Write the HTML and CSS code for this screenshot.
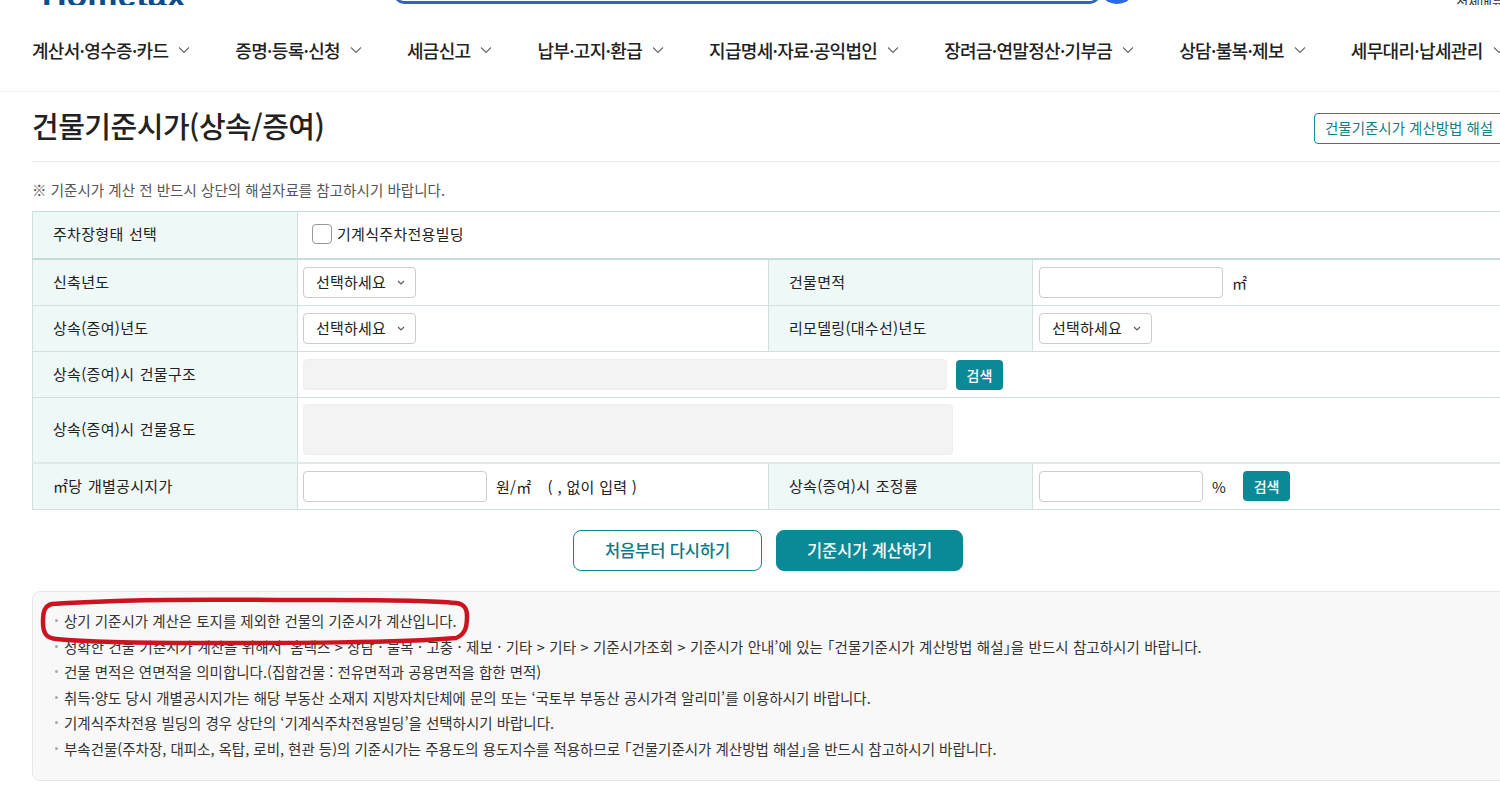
FILE: index.html
```html
<!DOCTYPE html>
<html lang="ko">
<head>
<meta charset="utf-8">
<title>건물기준시가(상속/증여)</title>
<link rel="stylesheet" href="styles.css">
</head>
<body>
<div class="page">
  <div class="topstrip">
    <div class="logo">Hometax</div>
    <div class="searchbar"></div>
    <div class="searchbtn"></div>
    <div class="allmenu">전체메뉴</div>
  </div>
  <nav class="gnb">
    <a class="gnb-item">계산서·영수증·카드<svg class="chev" viewBox="0 0 12 8"><path d="M1 1.5 6 6.5 11 1.5"/></svg></a>
    <a class="gnb-item">증명·등록·신청<svg class="chev" viewBox="0 0 12 8"><path d="M1 1.5 6 6.5 11 1.5"/></svg></a>
    <a class="gnb-item">세금신고<svg class="chev" viewBox="0 0 12 8"><path d="M1 1.5 6 6.5 11 1.5"/></svg></a>
    <a class="gnb-item">납부·고지·환급<svg class="chev" viewBox="0 0 12 8"><path d="M1 1.5 6 6.5 11 1.5"/></svg></a>
    <a class="gnb-item">지급명세·자료·공익법인<svg class="chev" viewBox="0 0 12 8"><path d="M1 1.5 6 6.5 11 1.5"/></svg></a>
    <a class="gnb-item">장려금·연말정산·기부금<svg class="chev" viewBox="0 0 12 8"><path d="M1 1.5 6 6.5 11 1.5"/></svg></a>
    <a class="gnb-item">상담·불복·제보<svg class="chev" viewBox="0 0 12 8"><path d="M1 1.5 6 6.5 11 1.5"/></svg></a>
    <a class="gnb-item">세무대리·납세관리<svg class="chev" viewBox="0 0 12 8"><path d="M1 1.5 6 6.5 11 1.5"/></svg></a>
  </nav>
  <main class="content">
    <div class="title-row">
      <h1 class="title">건물기준시가(상속/증여)</h1>
      <button class="guide-btn">건물기준시가 계산방법 해설</button>
    </div>
    <p class="note">※ 기준시가 계산 전 반드시 상단의 해설자료를 참고하시기 바랍니다.</p>
    <table class="form">
      <colgroup><col class="c1"><col class="c2"><col class="c3"><col class="c4"></colgroup>
      <tr class="r-park">
        <th>주차장형태 선택</th>
        <td colspan="3" class="park"><span class="check"></span>기계식주차전용빌딩</td>
      </tr>
      <tr class="r-first">
        <th>신축년도</th>
        <td><span class="select">선택하세요<svg class="mini" viewBox="0 0 8 5"><path d="M1 1 4 4 7 1"/></svg></span></td>
        <th class="th2">건물면적</th>
        <td class="td4"><span class="input w184"></span><span class="unit">㎡</span></td>
      </tr>
      <tr class="r-std">
        <th>상속(증여)년도</th>
        <td><span class="select">선택하세요<svg class="mini" viewBox="0 0 8 5"><path d="M1 1 4 4 7 1"/></svg></span></td>
        <th class="th2">리모델링(대수선)년도</th>
        <td class="td4"><span class="select">선택하세요<svg class="mini" viewBox="0 0 8 5"><path d="M1 1 4 4 7 1"/></svg></span></td>
      </tr>
      <tr class="r-std">
        <th>상속(증여)시 건물구조</th>
        <td colspan="3"><span class="input disabled w644"></span><button class="search-btn">검색</button></td>
      </tr>
      <tr class="r-use">
        <th>상속(증여)시 건물용도</th>
        <td colspan="3"><span class="textarea"></span></td>
      </tr>
      <tr class="r-last">
        <th>㎡당 개별공시지가</th>
        <td><span class="input w184"></span><span class="unit-won">원/㎡</span><span class="hint">( , 없이 입력 )</span></td>
        <th class="th2">상속(증여)시 조정률</th>
        <td class="td4"><span class="input w164"></span><span class="unit-pct">%</span><button class="search-btn">검색</button></td>
      </tr>
    </table>
    <div class="actions">
      <button class="btn-outline">처음부터 다시하기</button>
      <button class="btn-solid">기준시가 계산하기</button>
    </div>
    <ul class="notes">
      <li>상기 기준시가 계산은 토지를 제외한 건물의 기준시가 계산입니다.</li>
      <li class="wide">정확한 건물 기준시가 계산을 위해서 ‘홈택스 &gt; 상담 · 불복 · 고충 · 제보 · 기타 &gt; 기타 &gt; 기준시가조회 &gt; 기준시가 안내’에 있는 「건물기준시가 계산방법 해설」을 반드시 참고하시기 바랍니다.</li>
      <li>건물 면적은 연면적을 의미합니다.(집합건물 : 전유면적과 공용면적을 합한 면적)</li>
      <li>취득·양도 당시 개별공시지가는 해당 부동산 소재지 지방자치단체에 문의 또는 ‘국토부 부동산 공시가격 알리미’를 이용하시기 바랍니다.</li>
      <li>기계식주차전용 빌딩의 경우 상단의 ‘기계식주차전용빌딩’을 선택하시기 바랍니다.</li>
      <li>부속건물(주차장, 대피소, 옥탑, 로비, 현관 등)의 기준시가는 주용도의 용도지수를 적용하므로 「건물기준시가 계산방법 해설」을 반드시 참고하시기 바랍니다.</li>
    </ul>
  </main>
  <svg class="redmark" viewBox="0 0 440 52" aria-hidden="true"><path d="M14 8C70 4 150 3 240 4 310 4 380 3 418 7 426 8 429 12 429 20 429 30 428 38 418 42 360 47 250 47 160 47 100 47 50 46 18 43 8 42 5 37 5 26 5 16 6 10 14 8Z"/></svg>
</div>
</body>
</html>
```
FILE: styles.css
```css
* { box-sizing: border-box; }
html, body { margin: 0; padding: 0; height: 794px; overflow: hidden; background: #fff; }
body { font-family: "Noto Sans CJK KR", "Noto Sans", sans-serif; color: #222; font-size: 14px; }
.page { position: relative; width: 1500px; height: 794px; overflow: hidden; }

.topstrip { display: flex; align-items: flex-end; height: 5px; overflow: hidden; }
.logo { flex: none; width: 352px; margin-left: 42px; font: 700 34px/30px "Liberation Sans", sans-serif; color: #0f4c8a; margin-bottom: -5px; }
.searchbar { flex: none; width: 706px; height: 40px; border: 3px solid #3464b4; border-radius: 10px; margin-bottom: 1px; }
.searchbtn { flex: none; width: 38px; height: 38px; border-radius: 50%; background: #2b6bdc; margin-left: -2px; margin-bottom: 1px; }
.allmenu { flex: none; margin-left: auto; margin-right: -4px; font-size: 13px; line-height: 16px; margin-bottom: -5px; color: #333; }

.gnb { display: flex; align-items: center; height: 87px; padding: 4px 0 0 32px; border-bottom: 1px solid #eee; white-space: nowrap; width: 1560px; gap: 45px; }
.gnb-item { display: flex; align-items: center; gap: 10px; font-size: 18px; font-weight: 500; letter-spacing: -0.69px; color: #222; line-height: 24px; }
.chev { width: 12px; height: 8px; fill: none; stroke: #666; stroke-width: 1.1; }

.content { padding-left: 32px; width: 1540px; }
.title-row { display: flex; align-items: center; justify-content: space-between; height: 70px; border-bottom: 1px solid #e9e9e9; width: 1476px; padding-bottom: 1px; }
.title { margin: -2px 0 0; font-size: 29px; line-height: 40px; font-weight: 500; letter-spacing: -0.5px; color: #222; }
.guide-btn { flex: none; width: 194px; height: 31px; margin: 4px 0 0; padding: 0 0 0 10px; text-align: left; background: #fff; border: 1px solid #138a94; border-radius: 4px; font: 400 14.5px/28px "Noto Sans CJK KR", sans-serif; letter-spacing: 0; color: #107f88; white-space: nowrap; overflow: hidden; }
.note { margin: 0; height: 49px; padding-top: 18px; font-size: 14.5px; line-height: 20px; letter-spacing: 0.05px; color: #555; }

.form { border-collapse: collapse; table-layout: fixed; width: 1500px; border-top: 1px solid #c3dcdc; }
.c1 { width: 265px; } .c2 { width: 471px; } .c3 { width: 264px; } .c4 { width: 500px; }
.form th, .form td { border: 1px solid #cfe0e0; font-size: 15px; letter-spacing: 0.3px; font-weight: 400; color: #222; text-align: left; vertical-align: middle; padding: 0 0 0 5px; }
.form th { background: #eef8f7; padding-left: 20px; padding-bottom: 2px; word-spacing: 1px; }
.form tr:first-child th, .form tr:first-child td { border-top: 0; }
.form .td4 { padding-left: 6px; }
.r-park { height: 47px; }
.r-park th, .r-park td { border-bottom: 2px solid #c3dcdc; }
.r-first { height: 47px; }
.r-std { height: 46px; }
.r-use { height: 65px; }
.r-last { height: 47px; }
.r-last th, .r-last td { border-top: 2px solid #dfe9e9; }
.form .park { padding: 0 0 2px 14px; }
.check { display: inline-block; vertical-align: -4px; width: 20px; height: 20px; border: 1px solid #999; border-radius: 4px; margin-right: 5px; background: #fff; }

.select { display: inline-flex; align-items: center; justify-content: space-between; width: 113px; height: 31px; padding: 0 10px 2px 12px; border: 1px solid #ccc; border-radius: 4px; background: #fff; vertical-align: middle; letter-spacing: 0.2px; white-space: nowrap; }
.mini { width: 8px; height: 5px; fill: none; stroke: #555; stroke-width: 1.1; margin-top: 2px; }
.input { display: inline-block; height: 31px; border: 1px solid #ccc; border-radius: 4px; background: #fff; vertical-align: middle; }
.w184 { width: 184px; } .w164 { width: 164px; } .w644 { width: 644px; }
.disabled { background: #f3f3f3; border-color: #eee; }
.textarea { display: block; width: 650px; height: 51px; background: #f3f3f3; border: 1px solid #eee; border-radius: 4px; }
.unit { margin-left: 9px; vertical-align: middle; }
.unit-won { margin-left: 9px; vertical-align: middle; }
.hint { margin-left: 16px; vertical-align: middle; }
.unit-pct { margin-left: 9px; vertical-align: middle; }
.search-btn { width: 47px; height: 30px; margin-left: 9px; padding: 0; border: 0; border-radius: 4px; background: #0b8a96; color: #fff; font: 500 14px/30px "Noto Sans CJK KR", sans-serif; vertical-align: middle; }
.unit-pct + .search-btn { margin-left: 17px; }

.actions { display: flex; gap: 14px; padding: 20px 0 0 541px; height: 81px; }
.btn-outline, .btn-solid { height: 41px; border-radius: 8px; font: 500 16.5px/39px "Noto Sans CJK KR", sans-serif; letter-spacing: -0.1px; padding: 0; }
.btn-outline { width: 189px; background: #fff; border: 1px solid #0b8a96; color: #0f7a85; }
.btn-solid { width: 187px; background: #0b8a96; border: 1px solid #0b8a96; color: #fff; }

.notes { list-style: none; margin: 0; padding: 16px 0 19px 31px; width: 1500px; height: 190px; background: #f8f8f8; border: 1px solid #e6e6e6; border-radius: 8px; font-size: 14.5px; line-height: 25.6px; letter-spacing: 0; color: #333; font-feature-settings: "halt"; }
.notes li { position: relative; white-space: nowrap; }
.notes .wide { word-spacing: 0.38px; }
.notes li::before { content: ""; position: absolute; left: -9px; top: 11px; width: 3px; height: 3px; background: #aaa; border-radius: 50%; }

.redmark { position: absolute; left: 38px; top: 596px; width: 440px; height: 52px; fill: none; stroke: #cc1320; stroke-width: 4.5; }
```
